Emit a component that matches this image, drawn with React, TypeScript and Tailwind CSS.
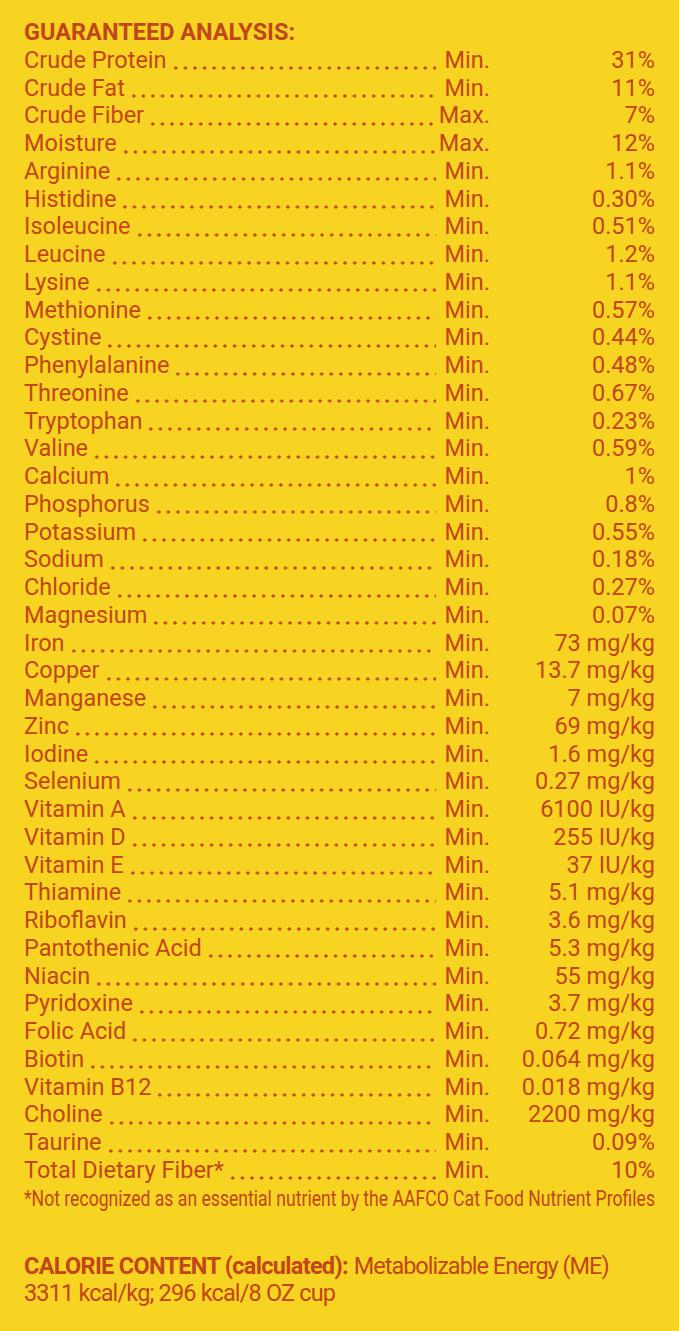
import React from "react";

type Row = { name: string; kind: string; value: string };

const rows: Row[] = [
  { name: "Crude Protein", kind: "Min.", value: "31%" },
  { name: "Crude Fat", kind: "Min.", value: "11%" },
  { name: "Crude Fiber", kind: "Max.", value: "7%" },
  { name: "Moisture", kind: "Max.", value: "12%" },
  { name: "Arginine", kind: "Min.", value: "1.1%" },
  { name: "Histidine", kind: "Min.", value: "0.30%" },
  { name: "Isoleucine", kind: "Min.", value: "0.51%" },
  { name: "Leucine", kind: "Min.", value: "1.2%" },
  { name: "Lysine", kind: "Min.", value: "1.1%" },
  { name: "Methionine", kind: "Min.", value: "0.57%" },
  { name: "Cystine", kind: "Min.", value: "0.44%" },
  { name: "Phenylalanine", kind: "Min.", value: "0.48%" },
  { name: "Threonine", kind: "Min.", value: "0.67%" },
  { name: "Tryptophan", kind: "Min.", value: "0.23%" },
  { name: "Valine", kind: "Min.", value: "0.59%" },
  { name: "Calcium", kind: "Min.", value: "1%" },
  { name: "Phosphorus", kind: "Min.", value: "0.8%" },
  { name: "Potassium", kind: "Min.", value: "0.55%" },
  { name: "Sodium", kind: "Min.", value: "0.18%" },
  { name: "Chloride", kind: "Min.", value: "0.27%" },
  { name: "Magnesium", kind: "Min.", value: "0.07%" },
  { name: "Iron", kind: "Min.", value: "73 mg/kg" },
  { name: "Copper", kind: "Min.", value: "13.7 mg/kg" },
  { name: "Manganese", kind: "Min.", value: "7 mg/kg" },
  { name: "Zinc", kind: "Min.", value: "69 mg/kg" },
  { name: "Iodine", kind: "Min.", value: "1.6 mg/kg" },
  { name: "Selenium", kind: "Min.", value: "0.27 mg/kg" },
  { name: "Vitamin A", kind: "Min.", value: "6100 IU/kg" },
  { name: "Vitamin D", kind: "Min.", value: "255 IU/kg" },
  { name: "Vitamin E", kind: "Min.", value: "37 IU/kg" },
  { name: "Thiamine", kind: "Min.", value: "5.1 mg/kg" },
  { name: "Riboflavin", kind: "Min.", value: "3.6 mg/kg" },
  { name: "Pantothenic Acid", kind: "Min.", value: "5.3 mg/kg" },
  { name: "Niacin", kind: "Min.", value: "55 mg/kg" },
  { name: "Pyridoxine", kind: "Min.", value: "3.7 mg/kg" },
  { name: "Folic Acid", kind: "Min.", value: "0.72 mg/kg" },
  { name: "Biotin", kind: "Min.", value: "0.064 mg/kg" },
  { name: "Vitamin B12", kind: "Min.", value: "0.018 mg/kg" },
  { name: "Choline", kind: "Min.", value: "2200 mg/kg" },
  { name: "Taurine", kind: "Min.", value: "0.09%" },
  { name: "Total Dietary Fiber*", kind: "Min.", value: "10%" },
];

const AnalysisRow = ({ row }: { row: Row }) => (
  <div className="flex h-[27.75px] leading-[27.75px]">
    <div className="flex w-[412px] min-w-0">
      <span className="whitespace-nowrap pr-[4px]">{row.name}</span>
      {/* dot leader */}
      <span className="flex-1 bg-[radial-gradient(circle,#c2461a_1.4px,transparent_1.8px)] bg-[length:9.6px_4px] bg-repeat-x bg-[position:0_19.5px]" />
    </div>
    <span className="w-[54px] text-right">{row.kind}</span>
    <span className="flex-1 text-right whitespace-nowrap">{row.value}</span>
  </div>
);

export default function App() {
  return (
    <div
      className="w-[679px] h-[1331px] bg-[#f7d322] text-[#c2461a] px-[24px] pt-[19px] overflow-hidden"
      style={{ fontFamily: "Roboto, 'Liberation Sans', sans-serif" }}
    >
      <div className="text-[23.5px]">
        <h1 className="font-bold text-[23.5px] leading-[27.75px]">GUARANTEED ANALYSIS:</h1>
        {rows.map((r) => (
          <AnalysisRow key={r.name} row={r} />
        ))}
        <p className="text-[22px] leading-[27.75px] whitespace-nowrap origin-left scale-x-[0.8]">
          *Not recognized as an essential nutrient by the AAFCO Cat Food Nutrient Profiles
        </p>
        <div className="mt-[41px] leading-[27px]">
          <p className="whitespace-nowrap">
            <span className="font-bold tracking-[-0.7px]">CALORIE CONTENT (calculated):</span>{" "}
            <span className="tracking-[-1px]">Metabolizable Energy (ME)</span>
          </p>
          <p className="tracking-[-0.85px]">3311 kcal/kg; 296 kcal/8 OZ cup</p>
        </div>
      </div>
    </div>
  );
}
